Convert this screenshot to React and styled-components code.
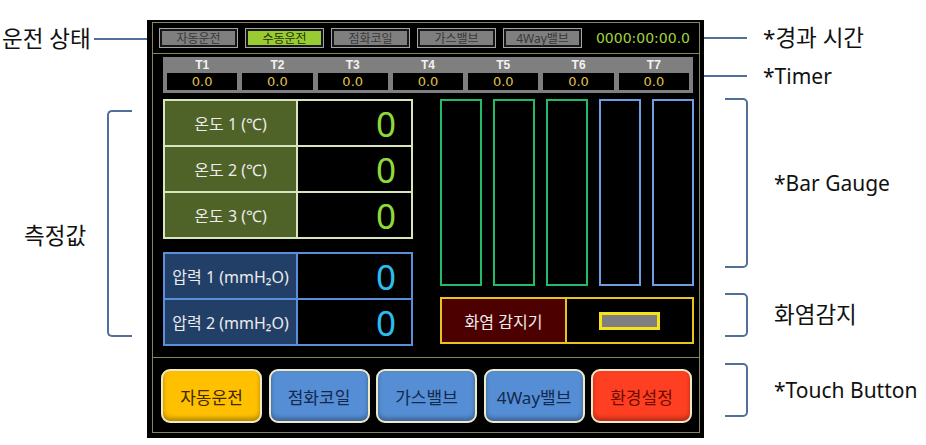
import styled, { createGlobalStyle } from "styled-components";

const GlobalStyle = createGlobalStyle`
  html, body {
    margin: 0;
    padding: 0;
    background: #ffffff;
  }
  body {
    font-family: "Noto Sans", "Noto Sans CJK KR", sans-serif;
  }
`;

const statusItems = [
  { label: "자동운전", active: false },
  { label: "수동운전", active: true },
  { label: "점화코일", active: false },
  { label: "가스밸브", active: false },
  { label: "4Way밸브", active: false },
];

const timers = ["T1", "T2", "T3", "T4", "T5", "T6", "T7"];

const temps = ["온도 1 (℃)", "온도 2 (℃)", "온도 3 (℃)"];
const pressures = ["압력 1 (mmH₂O)", "압력 2 (mmH₂O)"];

const bars = ["#22bb66", "#22bb66", "#22bb66", "#6f9de2", "#6f9de2"];

const touchButtons = [
  { label: "자동운전", bg: "#ffc000", fg: "#3d2a00" },
  { label: "점화코일", bg: "#558ed5", fg: "#13294d" },
  { label: "가스밸브", bg: "#558ed5", fg: "#13294d" },
  { label: "4Way밸브", bg: "#558ed5", fg: "#13294d" },
  { label: "환경설정", bg: "#ff3f22", fg: "#6e0a00" },
];

export default function App() {
  return (
    <>
      <GlobalStyle />
      <Page>
        <LeftNotes>
          <StatusNote>
            <NoteText $ko>운전 상태</NoteText>
            <Leader />
          </StatusNote>
          <MeasureNote>
            <MeasureText $ko>측정값</MeasureText>
            <LeftBracket />
          </MeasureNote>
        </LeftNotes>

        <Screen>
          <Frame>
            <StatusBar>
              {statusItems.map((s) => (
                <StatusButton key={s.label} $active={s.active}>
                  {s.label}
                </StatusButton>
              ))}
              <ElapsedTime>0000:00:00.0</ElapsedTime>
            </StatusBar>

            <TimerSection>
              <TimerBar>
                {timers.map((t) => (
                  <TimerCell key={t}>
                    <TimerLabel>{t}</TimerLabel>
                    <TimerValue>0.0</TimerValue>
                  </TimerCell>
                ))}
              </TimerBar>
            </TimerSection>

            <Main>
              <LeftCol>
                <Table $line="#d9e5bd">
                  {temps.map((t) => (
                    <Row key={t} $line="#d9e5bd">
                      <LabelCell $bg="#4f6228" $line="#d9e5bd">
                        {t}
                      </LabelCell>
                      <ValueCell $color="#8fd93a">0</ValueCell>
                    </Row>
                  ))}
                </Table>
                <Table $line="#5b8fd9">
                  {pressures.map((p) => (
                    <Row key={p} $line="#5b8fd9">
                      <LabelCell $bg="#223f68" $line="#5b8fd9">
                        {p}
                      </LabelCell>
                      <ValueCell $color="#2cbcee">0</ValueCell>
                    </Row>
                  ))}
                </Table>
              </LeftCol>

              <RightCol>
                <Bars>
                  {bars.map((c, i) => (
                    <Bar key={i} $color={c} />
                  ))}
                </Bars>
                <FlameBox>
                  <FlameLabel>화염 감지기</FlameLabel>
                  <FlameCell>
                    <FlameLamp />
                  </FlameCell>
                </FlameBox>
              </RightCol>
            </Main>

            <ButtonBar>
              {touchButtons.map((b) => (
                <TouchButton key={b.label} $bg={b.bg} $fg={b.fg}>
                  {b.label}
                </TouchButton>
              ))}
            </ButtonBar>
          </Frame>
        </Screen>

        <RightNotes>
          <LeaderNote $top={26}>
            <RightLeader />
            <NoteText $ko>*경과 시간</NoteText>
          </LeaderNote>
          <LeaderNote $top={14}>
            <RightLeader />
            <NoteText>*Timer</NoteText>
          </LeaderNote>
          <BracketNote $top={10}>
            <RightBracket $h={170} />
            <NoteText>*Bar Gauge</NoteText>
          </BracketNote>
          <BracketNote $top={25}>
            <RightBracket $h={44} />
            <NoteText $ko>화염감지</NoteText>
          </BracketNote>
          <BracketNote $top={26}>
            <RightBracket $h={54} />
            <NoteText>*Touch Button</NoteText>
          </BracketNote>
        </RightNotes>
      </Page>
    </>
  );
}

const noteLine = "#50709a";
const frameLine = "#86865a";

const Page = styled.div`
  display: flex;
  width: 926px;
  height: 445px;
  overflow: hidden;
  background: #ffffff;
`;

const LeftNotes = styled.div`
  width: 147px;
  flex: none;
  display: flex;
  flex-direction: column;
`;

const NoteText = styled.span`
  font-size: ${(p) => (p.$ko ? 22.5 : 21)}px;
  line-height: 1;
  color: #111;
  white-space: nowrap;
`;

const StatusNote = styled.div`
  display: flex;
  align-items: center;
  height: 24px;
  margin-top: 27px;
  padding-left: 2px;
`;

const Leader = styled.div`
  flex: 1;
  height: 2px;
  margin-left: 3px;
  background: ${noteLine};
`;

const MeasureNote = styled.div`
  display: flex;
  align-items: center;
  height: 227px;
  margin-top: 59px;
  padding-left: 24px;
  gap: 21px;
`;

const MeasureText = styled(NoteText)`
  margin-top: 26px;
`;

const LeftBracket = styled.div`
  width: 25px;
  align-self: stretch;
  box-sizing: border-box;
  border: 2px solid ${noteLine};
  border-right: none;
  border-radius: 5px 0 0 5px;
`;

const Screen = styled.div`
  width: 557px;
  height: 418px;
  flex: none;
  margin-top: 20px;
  box-sizing: border-box;
  padding: 2px 4px 5px 5px;
  background: #000;
`;

const Frame = styled.div`
  height: 100%;
  box-sizing: border-box;
  border: 1px solid ${frameLine};
  display: flex;
  flex-direction: column;
  font-family: "Noto Sans", "Noto Sans CJK KR", sans-serif;
`;

const StatusBar = styled.div`
  height: 31px;
  flex: none;
  box-sizing: border-box;
  display: flex;
  align-items: center;
  gap: 7px;
  padding: 0 9px 0 6px;
  border-bottom: 1px solid ${frameLine};
`;

const StatusButton = styled.div`
  width: 79px;
  height: 20px;
  box-sizing: border-box;
  border: 1px solid #a4a4a4;
  box-shadow: inset 0 0 0 2px #161616;
  background: ${(p) => (p.$active ? "#99cc33" : "#7f7f7f")};
  color: ${(p) => (p.$active ? "#1e3000" : "#383838")};
  font-size: 12px;
  display: flex;
  align-items: center;
  justify-content: center;
`;

const ElapsedTime = styled.div`
  margin-left: auto;
  color: #a3d03a;
  font-family: "DejaVu Sans", sans-serif;
  font-size: 14px;
`;

const TimerSection = styled.div`
  height: 42px;
  flex: none;
  box-sizing: border-box;
  padding: 3px 6px 0 10px;
`;

const TimerBar = styled.div`
  height: 36px;
  box-sizing: border-box;
  background: #7f7f7f;
  padding: 1px 4px 3px;
  display: grid;
  grid-template-columns: repeat(7, 1fr);
  column-gap: 5px;
`;

const TimerCell = styled.div`
  display: flex;
  flex-direction: column;
  align-items: center;
`;

const TimerLabel = styled.div`
  height: 15px;
  line-height: 15px;
  font-family: "Liberation Sans", sans-serif;
  font-weight: bold;
  font-size: 12px;
  color: #f2f2f2;
`;

const TimerValue = styled.div`
  align-self: stretch;
  height: 17px;
  background: #000;
  color: #e2c04a;
  font-family: "DejaVu Sans", sans-serif;
  font-size: 13px;
  display: flex;
  align-items: center;
  justify-content: center;
`;

const Main = styled.div`
  flex: 1;
  display: flex;
  justify-content: space-between;
  padding: 3px 5px 0 10px;
`;

const LeftCol = styled.div`
  width: 250px;
  display: flex;
  flex-direction: column;
  gap: 13px;
`;

const Table = styled.div`
  border: 2px solid ${(p) => p.$line};
  display: flex;
  flex-direction: column;
`;

const Row = styled.div`
  display: flex;
  height: 44px;
  &:not(:first-child) {
    border-top: 2px solid ${(p) => p.$line};
  }
`;

const LabelCell = styled.div`
  width: 131px;
  flex: none;
  background: ${(p) => p.$bg};
  border-right: 2px solid ${(p) => p.$line};
  color: #ececec;
  font-size: 16px;
  display: flex;
  align-items: center;
  justify-content: center;
  white-space: nowrap;
`;

const ValueCell = styled.div`
  flex: 1;
  color: ${(p) => p.$color};
  font-size: 35px;
  line-height: 1;
  display: flex;
  align-items: center;
  justify-content: flex-end;
  padding-right: 15px;
`;

const RightCol = styled.div`
  width: 254px;
  display: flex;
  flex-direction: column;
  gap: 11px;
`;

const Bars = styled.div`
  height: 187px;
  display: flex;
  gap: 11px;
`;

const Bar = styled.div`
  width: 42px;
  box-sizing: border-box;
  border: 2px solid ${(p) => p.$color};
`;

const FlameBox = styled.div`
  height: 47px;
  box-sizing: border-box;
  display: flex;
  border: 2px solid #e8c41c;
`;

const FlameLabel = styled.div`
  width: 123px;
  flex: none;
  background: #4d0000;
  border-right: 2px solid #e8c41c;
  color: #efefef;
  font-size: 16px;
  display: flex;
  align-items: center;
  justify-content: center;
`;

const FlameCell = styled.div`
  flex: 1;
  display: flex;
  align-items: center;
  justify-content: center;
`;

const FlameLamp = styled.div`
  width: 61px;
  height: 18px;
  box-sizing: border-box;
  border: 3px solid #f4e21a;
  background: #7f7f7f;
`;

const ButtonBar = styled.div`
  height: 75px;
  flex: none;
  box-sizing: border-box;
  border-top: 1px solid ${frameLine};
  padding: 11px 7px 9px 8px;
  display: flex;
  justify-content: space-between;
  align-items: flex-start;
`;

const TouchButton = styled.div`
  width: 101px;
  height: 54px;
  box-sizing: border-box;
  border: 2px solid #efe9c8;
  border-radius: 9px;
  background: ${(p) => p.$bg};
  color: ${(p) => p.$fg};
  box-shadow: inset 0 -3px 4px rgba(0, 0, 0, 0.3);
  font-size: 17px;
  display: flex;
  align-items: center;
  justify-content: center;
  white-space: nowrap;
`;

const RightNotes = styled.div`
  flex: 1;
  display: flex;
  flex-direction: column;
`;

const LeaderNote = styled.div`
  display: flex;
  align-items: center;
  height: 24px;
  margin-top: ${(p) => p.$top}px;
`;

const RightLeader = styled.div`
  width: 43px;
  height: 2px;
  margin-right: 16px;
  background: ${noteLine};
`;

const BracketNote = styled.div`
  display: flex;
  align-items: center;
  gap: 26px;
  padding-left: 21px;
  margin-top: ${(p) => p.$top}px;
`;

const RightBracket = styled.div`
  width: 23px;
  height: ${(p) => p.$h}px;
  box-sizing: border-box;
  border: 2px solid ${noteLine};
  border-left: none;
  border-radius: 0 5px 5px 0;
`;
